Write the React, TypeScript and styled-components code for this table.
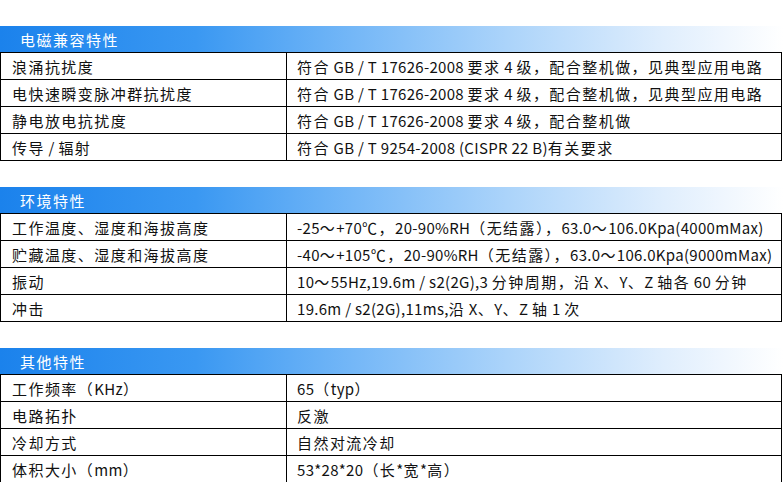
import React from "react";
import styled, { createGlobalStyle } from "styled-components";

const Global = createGlobalStyle`
  html, body { margin: 0; padding: 0; background: #ffffff; }
  body { font-family: "Noto Sans CJK SC", "Noto Sans", sans-serif; }
`;

const Page = styled.div`
  width: 783px;
  padding-top: 26px;
  display: flex;
  flex-direction: column;
  gap: 26px;
`;

const Section = styled.section`
  display: flex;
  flex-direction: column;
`;

const SectionHeader = styled.div`
  height: 26px;
  display: flex;
  align-items: center;
  padding-left: 20px;
  color: #ffffff;
  font-size: 15px;
  letter-spacing: 1.5px;
  background: linear-gradient(
    to right,
    #1b82ec 0%,
    #3a98f2 25%,
    #74b7f7 45%,
    #acd4fa 65%,
    #e0eefd 85%,
    #ffffff 100%
  );
`;

const Table = styled.div`
  width: 782px;
  box-sizing: border-box;
  border: 1px solid #000;
  display: flex;
  flex-direction: column;
`;

const Row = styled.div<{ $last?: boolean }>`
  display: grid;
  grid-template-columns: 286px 1fr;
  height: ${(p) => (p.$last ? "26px" : "27px")};
  border-bottom: ${(p) => (p.$last ? "none" : "1px solid #000")};
  box-sizing: border-box;
`;

const Cell = styled.div<{ $label?: boolean }>`
  border-right: ${(p) => (p.$label ? "1px solid #000" : "none")};
  display: flex;
  align-items: center;
  padding-left: ${(p) => (p.$label ? "11px" : "10px")};
  font-size: 15px;
  color: #111;
  white-space: pre;
  overflow: hidden;
`;

const Wide = styled.span`
  letter-spacing: 1.45px;
`;

const Narrow = styled.span`
  letter-spacing: 0.3px;
`;

function Mixed({ text }: { text: string }) {
  const parts = text.split(/([\x00-\x7F]+)/).filter((p) => p.length > 0);
  return (
    <>
      {parts.map((p, i) =>
        /^[\x00-\x7F]+$/.test(p) ? <Narrow key={i}>{p}</Narrow> : <Wide key={i}>{p}</Wide>
      )}
    </>
  );
}

type Spec = [string, string];

const sections: { title: string; rows: Spec[] }[] = [
  {
    title: "电磁兼容特性",
    rows: [
      ["浪涌抗扰度", "符合 GB / T 17626-2008 要求 4 级，配合整机做，见典型应用电路"],
      ["电快速瞬变脉冲群抗扰度", "符合 GB / T 17626-2008 要求 4 级，配合整机做，见典型应用电路"],
      ["静电放电抗扰度", "符合 GB / T 17626-2008 要求 4 级，配合整机做"],
      ["传导 / 辐射", "符合 GB / T 9254-2008 (CISPR 22 B)有关要求"],
    ],
  },
  {
    title: "环境特性",
    rows: [
      ["工作温度、湿度和海拔高度", "-25～+70℃，20-90%RH（无结露），63.0～106.0Kpa(4000mMax)"],
      ["贮藏温度、湿度和海拔高度", "-40～+105℃，20-90%RH（无结露），63.0～106.0Kpa(9000mMax)"],
      ["振动", "10～55Hz,19.6m / s2(2G),3 分钟周期，沿 X、Y、Z 轴各 60 分钟"],
      ["冲击", "19.6m / s2(2G),11ms,沿 X、Y、Z 轴 1 次"],
    ],
  },
  {
    title: "其他特性",
    rows: [
      ["工作频率（KHz）", "65（typ）"],
      ["电路拓扑", "反激"],
      ["冷却方式", "自然对流冷却"],
      ["体积大小（mm）", "53*28*20（长*宽*高）"],
    ],
  },
];

export default function App() {
  return (
    <>
      <Global />
      <Page>
        {sections.map((s) => (
          <Section key={s.title}>
            <SectionHeader>{s.title}</SectionHeader>
            <Table>
              {s.rows.map(([k, v], i) => (
                <Row key={k} $last={i === s.rows.length - 1}>
                  <Cell $label>
                    <Mixed text={k} />
                  </Cell>
                  <Cell>
                    <Mixed text={v} />
                  </Cell>
                </Row>
              ))}
            </Table>
          </Section>
        ))}
      </Page>
    </>
  );
}
